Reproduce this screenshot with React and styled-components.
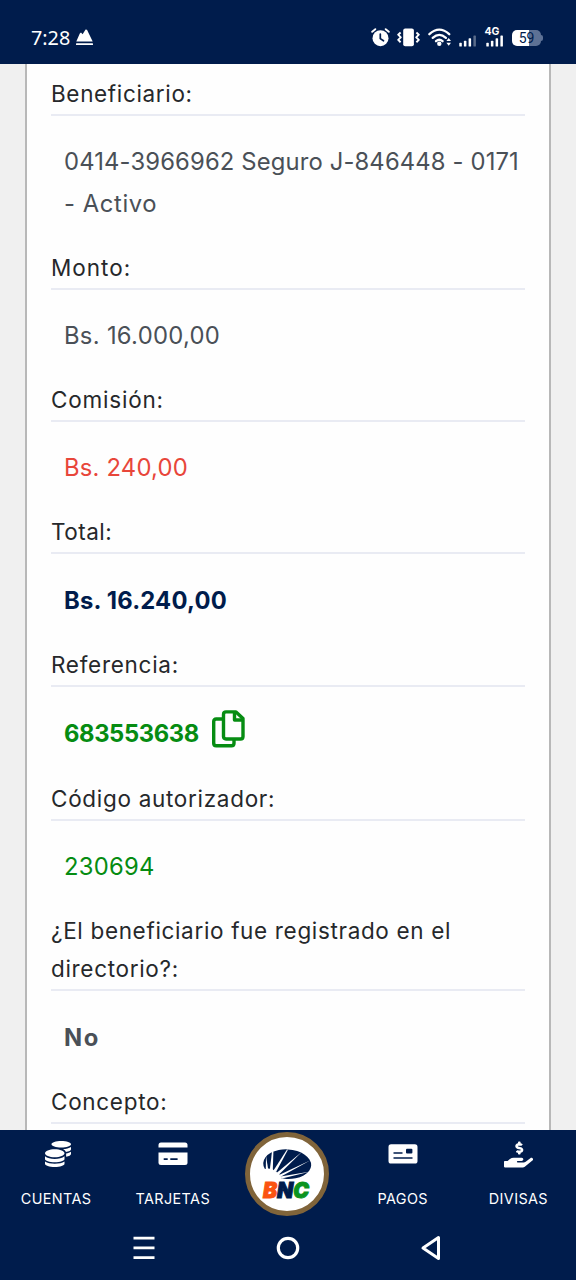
import React from 'react'
import styled, { createGlobalStyle } from 'styled-components';
import { FaCoins, FaHandHoldingUsd } from 'react-icons/fa';

// each line of text is [text, letter spacing]
const FIELDS = [
    { label: [['Beneficiario:', 0.65]], value: [['0414-3966962 Seguro J-846448 - 0171', 0.15], ['- Activo', 0.6]] },
    { label: [['Monto:', 1]], value: [['Bs. 16.000,00', 0.3]] },
    { label: [['Comisión:', 0.8]], value: [['Bs. 240,00', 0.2]], color: '#e8463a' },
    { label: [['Total:', 0.5]], value: [['Bs. 16.240,00', 0.2]], color: '#001c4c', bold: true },
    { label: [['Referencia:', 0.72]], value: [['683553638', -0.4]], color: '#068c12', bold: true, copy: true },
    { label: [['Código autorizador:', 0.7]], value: [['230694', 0.25]], color: '#068c12' },
    { label: [['¿El beneficiario fue registrado en el', 0.66], ['directorio?:', 0.68]], value: [['No', 1.5]], bold: true },
    { label: [['Concepto:', 0.7]], value: [] },
];

const Lines = ({ items }) => items.map(([text, spacing]) => (
    <Line key={text} $spacing={spacing}>{text}</Line>
));

const CopyIcon = () => (
    <svg width="33" height="38" viewBox="0 0 33 38" fill="none" stroke="currentColor" strokeWidth="3.4" strokeLinejoin="round">
        <path d="M11 9H4.200Q1.700 9 1.700 11.500V33.300Q1.700 35.800 4.200 35.800H19.500Q22 35.800 22 33.300V29" />
        <path d="M14 1.900H24L31 8.500V26.500Q31 29 28.500 29H14Q11.500 29 11.500 26.500V4.400Q11.500 1.900 14 1.900Z" />
        <path d="M22.500 2V10H31" />
    </svg>
);

const MountainIcon = () => (
    <svg width="17" height="17" viewBox="0 0 17 17" fill="white">
        <path d="M0.300 12.500L3.800 4.600L5 3.600L6.600 5.200L9.600 0.400L11 0.800L16.700 12.500Z" />
        <rect y="14.200" width="17" height="1.900" rx="0.600" />
    </svg>
);

const AlarmIcon = () => (
    <svg width="19" height="19" viewBox="0 0 19 19" fill="none" stroke="white" strokeLinecap="round">
        <circle cx="9.500" cy="10.200" r="8" fill="white" stroke="none" />
        <path d="M1.200 3.800L4.300 1.200M17.800 3.800L14.700 1.200" strokeWidth="1.900" />
        <path d="M9.300 6V10.600L12.500 12.800" stroke="#001c4c" strokeWidth="1.700" />
    </svg>
);

const VibrateIcon = () => (
    <svg width="23" height="19" viewBox="0 0 23 19" fill="none" stroke="white" strokeWidth="1.900" strokeLinejoin="round">
        <rect x="6.200" y="0.500" width="10.700" height="17.800" rx="2" fill="white" stroke="none" />
        <path d="M3.600 4.500L1.200 6.700L3.800 9.300L1.200 11.900L3.600 14.200" />
        <path d="M19.400 4.500L21.800 6.700L19.200 9.300L21.800 11.900L19.400 14.200" />
    </svg>
);

const WifiIcon = () => (
    <svg width="24" height="19" viewBox="0 0 24 19" fill="none" stroke="white" strokeWidth="2.300" strokeLinecap="round">
        <path d="M1.400 6.200Q11.300 -2.900 21.200 6.200" />
        <path d="M4.700 9.900Q11.300 3.900 17.900 9.900" />
        <path d="M8 13.200Q11.300 10.300 14.600 13.200" />
        <circle cx="11.300" cy="15.700" r="2.200" fill="white" stroke="none" />
        <path d="M20.700 9.900L23 13H18.400ZM20.700 17.800L23 14.700H18.400Z" fill="white" stroke="none" />
    </svg>
);

const SignalIcon = ({ weak }) => (
    <svg width="18" height="12" viewBox="0 0 18 12" fill="white">
        <rect x="0.300" y="7.700" width="2.500" height="3.900" rx="0.700" />
        <rect x="4.900" y="5.700" width="2.500" height="5.900" rx="0.700" />
        <rect x="9.600" y="3.200" width="2.500" height="8.400" rx="0.700" />
        <rect x="14.400" y="0.400" width="2.500" height="11.200" rx="0.700" opacity={weak ? 0.35 : 1} />
    </svg>
);

const CardIcon = () => (
    <svg width="30" height="24" viewBox="0 0 30 24" fill="white">
        <path d="M3 0.500H27Q29.500 0.500 29.500 3V5.500H0.500V3Q0.500 0.500 3 0.500Z" />
        <path d="M0.500 10.500H29.500V20.500Q29.500 23 27 23H3Q0.500 23 0.500 20.500Z" />
        <path d="M5.700 17.200H9.700M12.300 17.200H19.600" stroke="#001c4c" strokeWidth="1.800" />
    </svg>
);

const CheckIcon = () => (
    <svg width="30" height="20" viewBox="0 0 30 20">
        <rect x="0.500" y="0.300" width="29" height="19.200" rx="2.600" fill="white" />
        <rect x="18" y="4.800" width="6.400" height="4.800" rx="1" fill="#001c4c" />
        <path d="M5.500 9H14.500M5.500 13.900H24.500" stroke="#001c4c" strokeWidth="1.500" />
    </svg>
);

const BankLogo = () => (
    <svg width="74" height="74" viewBox="0 0 74 74">
        <ellipse cx="37.200" cy="27.200" rx="24" ry="14.800" fill="#001c4c" transform="rotate(3 37.200 27.200)" />
        <g fill="white">
            <path d="M12 32.500L18 31.500L22 32L26 34.500L29.500 37.500L32 40.500L27 44H12Z" />
            <path d="M15.800 33L16 19L18.300 33Z" />
            <path d="M19.800 33L22 14.500L23.400 14.500L22.800 33Z" />
            <path d="M23.500 33.500L37 12.400L37.900 12.700L26 35Z" />
            <path d="M26.500 36L52 14.700L29 37.500Z" />
            <path d="M29 38L60 23.500L31 39.500Z" />
            <path d="M30.500 39.500L60.500 34.500L32 41.500Z" />
        </g>
        <text x="13" y="60.500" fontFamily="Inter, sans-serif" fontSize="21.500" fontWeight="900" fontStyle="italic" strokeWidth="1" textLength="46" lengthAdjust="spacingAndGlyphs">
            <tspan fill="#fb5310" stroke="#fb5310">B</tspan><tspan fill="#001c4c" stroke="#001c4c">N</tspan><tspan fill="#0a9420" stroke="#0a9420">C</tspan>
        </text>
    </svg>
);

const App = () => {
    return (
        <Screen>
            <GlobalStyle />
            <StatusBar>
                <Clock>7:28</Clock>
                <MountainIcon />
                <StatusIcons>
                    <AlarmIcon />
                    <VibrateIcon />
                    <WifiIcon />
                    <Signal><SignalIcon weak /></Signal>
                    <Signal><Network>4G</Network><SignalIcon /></Signal>
                    <Battery>59</Battery>
                </StatusIcons>
            </StatusBar>
            <Page>
                <Card>
                    {FIELDS.map((field) => (
                        <section key={field.label[0][0]}>
                            <Label><Lines items={field.label} /></Label>
                            <Value $color={field.color} $bold={field.bold}>
                                {field.copy
                                    ? <CopyRow><Lines items={field.value} /><CopyIcon /></CopyRow>
                                    : <Lines items={field.value} />}
                            </Value>
                        </section>
                    ))}
                </Card>
            </Page>
            <TabBar>
                <Tab $shift={3}><IconBox $nudge={3}><FaCoins size={26} /></IconBox><TabText>CUENTAS</TabText></Tab>
                <Tab><IconBox><CardIcon /></IconBox><TabText>TARJETAS</TabText></Tab>
                <Tab $shift={1}><LogoButton><BankLogo /></LogoButton></Tab>
                <Tab $shift={1}><IconBox $nudge={1}><CheckIcon /></IconBox><TabText>PAGOS</TabText></Tab>
                <Tab><IconBox><FaHandHoldingUsd size={29} /></IconBox><TabText>DIVISAS</TabText></Tab>
            </TabBar>
            <SystemBar>
                <svg width="22" height="24" viewBox="0 0 22 24" fill="white">
                    <path d="M0.500 0.800H21.500V3.600H0.500ZM0.500 10.500H21.500V13.300H0.500ZM0.500 20.300H21.500V23.100H0.500Z" />
                </svg>
                <svg width="24" height="24" viewBox="0 0 24 24" fill="none" stroke="white" strokeWidth="3.200">
                    <circle cx="12" cy="12" r="9.700" />
                </svg>
                <svg width="24" height="26" viewBox="0 0 24 26" fill="none" stroke="white" strokeWidth="3" strokeLinejoin="round">
                    <path d="M18.500 2.600V23.400L3 13Z" />
                </svg>
            </SystemBar>
        </Screen>
    )
}

const GlobalStyle = createGlobalStyle`
    * {
        box-sizing: border-box;
    }

    body {
        margin: 0;
        font-family: Inter, sans-serif;
    }

    svg {
        display: block;
        flex-shrink: 0;
    }
`;

const Screen = styled.div`
    height: 1280px;
    display: flex;
    flex-direction: column;
    overflow: hidden;
    background-color: #001c4c;
`;

const StatusBar = styled.header`
    height: 64px;
    padding: 11px 33px 0 31px;
    display: flex;
    align-items: center;
    color: white;
`;

const Clock = styled.span`
    margin-right: 6px;
    font-family: "Noto Sans", sans-serif;
    font-size: 19.8px;
`;

const StatusIcons = styled.div`
    margin-left: auto;
    display: flex;
    align-items: center;
    gap: 7.5px;
`;

const Signal = styled.div`
    height: 19px;
    display: flex;
    flex-direction: column;
    justify-content: flex-end;
    margin-right: 1px;
`;

const Network = styled.span`
    margin: 0 0 -2px -1px;
    font-size: 10.5px;
    font-weight: 700;
    line-height: 10px;
`;

const Battery = styled.div`
    position: relative;
    width: 29px;
    height: 16px;
    margin-right: 2px;
    border-radius: 5px;
    background: linear-gradient(90deg, white 59%, #5d7195 59%);
    font-family: Roboto, sans-serif;
    font-size: 14px;
    line-height: 17px;
    text-align: center;
    color: #001c4c;

    &::after {
        content: "";
        position: absolute;
        top: 5px;
        right: -2px;
        width: 2px;
        height: 6px;
        border-radius: 0 2px 2px 0;
        background-color: #5d7195;
    }
`;

const Page = styled.main`
    height: 1066px;
    padding: 0 25px;
    overflow: hidden;
    background-color: #f0f0f0;
`;

const Card = styled.div`
    padding: 11px 24px 0;
    border: 2px solid #b8b8b8;
    border-width: 0 2px;
    background-color: #fefefe;
`;

const Line = styled.div`
    letter-spacing: ${(p) => p.$spacing}px;
    white-space: nowrap;
`;

const Label = styled.div`
    padding-bottom: 1px;
    border-bottom: 2px solid #e9ebf3;
    font-size: 22.5px;
    line-height: 38px;
    color: #26282b;
`;

const Value = styled.div`
    padding: 25.2px 13px 24.5px;
    font-size: 23.8px;
    line-height: 41.6px;
    font-weight: ${(p) => (p.$bold ? 700 : 400)};
    color: ${(p) => p.$color || '#4a5057'};
`;

const CopyRow = styled.div`
    height: 43.8px;
    display: flex;
    align-items: center;
    gap: 13px;

    svg {
        margin: -4.5px 0 4.5px;
    }
`;

const TabBar = styled.nav`
    height: 86px;
    display: grid;
    grid-template-columns: repeat(5, 1fr);
    color: white;
`;

const Tab = styled.div`
    padding-right: ${(p) => p.$shift || 0}px;
    display: flex;
    flex-direction: column;
    align-items: center;
`;

const IconBox = styled.div`
    height: 48px;
    padding-left: ${(p) => p.$nudge || 0}px;
    display: flex;
    align-items: center;
`;

const TabText = styled.span`
    margin-top: 12px;
    font-size: 14.4px;
    line-height: 18px;
    letter-spacing: 0.4px;
`;

const LogoButton = styled.div`
    width: 84px;
    height: 84px;
    margin-top: 2px;
    border: 5px solid #80643a;
    border-radius: 50%;
    background-color: white;
`;

const SystemBar = styled.div`
    height: 64px;
    padding: 0 72px;
    display: grid;
    grid-template-columns: repeat(3, 1fr);
    align-items: center;
    justify-items: center;
`;

export default App;
